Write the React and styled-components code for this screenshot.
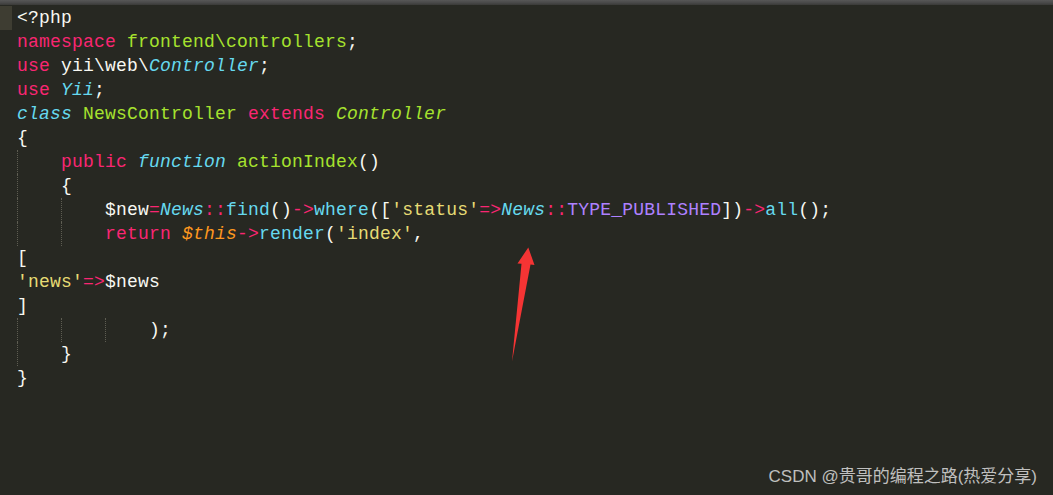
import React from "react";
import styled, { createGlobalStyle } from "styled-components";

const GlobalStyle = createGlobalStyle`
  html, body {
    margin: 0;
    padding: 0;
    background: #272822;
    overflow: hidden;
  }
`;

const colors = {
  plain: "#f8f8f2",
  kw: "#f92672",
  fn: "#a6e22e",
  sup: "#66d9ef",
  str: "#e6db74",
  num: "#ae81ff",
  vr: "#fd971f",
};

const Screen = styled.div`
  position: relative;
  width: 1053px;
  height: 495px;
  background: #272822;
  display: flex;
  flex-direction: column;
  overflow: hidden;
`;

const TopBar = styled.div`
  height: 5px;
  background: linear-gradient(#575757 0%, #4a4a4a 50%, #3a3a38 100%);
`;

const Code = styled.div`
  display: flex;
  flex-direction: column;
  padding-top: 1px;
  font-family: "Liberation Mono", "DejaVu Sans Mono", monospace;
  font-size: 18px;
  letter-spacing: 0.2px;
  color: ${colors.plain};
`;

const Line = styled.div`
  display: flex;
  height: 24px;
  align-items: stretch;
`;

const Gutter = styled.div`
  width: 12px;
  background: ${(p) => (p.$active ? "#3e3d32" : "transparent")};
`;

const Content = styled.div`
  display: flex;
  align-items: center;
  padding-left: 5px;
  white-space: pre;
  line-height: 24px;
`;

const Indent = styled.span`
  box-sizing: border-box;
  width: 44px;
  height: 24px;
  flex-shrink: 0;
  border-left: 1px dotted ${(p) => (p.$guide ? "#5e5d52" : "transparent")};
`;

const Tok = styled.span`
  color: ${(p) => colors[p.$k || "plain"]};
  font-style: ${(p) => (p.$i ? "italic" : "normal")};
`;

const Watermark = styled.div`
  position: absolute;
  right: 16px;
  bottom: 8px;
  font-family: "Liberation Sans", "Noto Sans CJK SC", sans-serif;
  font-size: 17px;
  color: rgba(235, 235, 235, 0.78);
`;

const ArrowSvg = styled.svg`
  position: absolute;
  left: 0;
  top: 0;
  pointer-events: none;
`;

const lines = [
  { indent: 0, toks: [["<?php"]] },
  { indent: 0, toks: [["namespace", "kw"], [" "], ["frontend\\controllers", "fn"], [";"]] },
  { indent: 0, toks: [["use", "kw"], [" yii\\web\\"], ["Controller", "sup", 1], [";"]] },
  { indent: 0, toks: [["use", "kw"], [" "], ["Yii", "sup", 1], [";"]] },
  {
    indent: 0,
    toks: [["class", "sup", 1], [" "], ["NewsController", "fn"], [" "], ["extends", "kw"], [" "], ["Controller", "fn", 1]],
  },
  { indent: 0, toks: [["{"]] },
  {
    indent: 1,
    toks: [["public", "kw"], [" "], ["function", "sup", 1], [" "], ["actionIndex", "fn"], ["()"]],
  },
  { indent: 1, toks: [["{"]] },
  {
    indent: 2,
    toks: [
      ["$new"], ["=", "kw"], ["News", "sup", 1], ["::", "kw"], ["find", "sup"], ["()"], ["->", "kw"],
      ["where", "sup"], ["(["], ["'status'", "str"], ["=>", "kw"], ["News", "sup", 1], ["::", "kw"],
      ["TYPE_PUBLISHED", "num"], ["])"], ["->", "kw"], ["all", "sup"], ["();"],
    ],
  },
  {
    indent: 2,
    toks: [["return", "kw"], [" "], ["$this", "vr", 1], ["->", "kw"], ["render", "sup"], ["("], ["'index'", "str"], [","]],
  },
  { indent: 0, toks: [["["]] },
  { indent: 0, toks: [["'news'", "str"], ["=>", "kw"], ["$news"]] },
  { indent: 0, toks: [["]"]] },
  { indent: 3, toks: [[");"]] },
  { indent: 1, toks: [["}"]] },
  { indent: 0, toks: [["}"]] },
];

const App = () => (
  <>
    <GlobalStyle />
    <Screen>
      <TopBar />
      <Code>
        {lines.map((line, i) => (
          <Line key={i}>
            <Gutter $active={i === 0} />
            <Content>
              {Array.from({ length: line.indent }).map((_, j) => (
                <Indent key={j} $guide />
              ))}
              {line.toks.map(([text, k, it], j) => (
                <Tok key={j} $k={k} $i={it}>
                  {text}
                </Tok>
              ))}
            </Content>
          </Line>
        ))}
      </Code>
      <ArrowSvg width="1053" height="495" viewBox="0 0 1053 495">
        <polygon
          points="528.3,247.5 534.5,265 530.5,264.5 512,361.5 521.5,263.8 517.5,263.5"
          fill="#f53434"
        />
      </ArrowSvg>
      <Watermark>CSDN @贵哥的编程之路(热爱分享)</Watermark>
    </Screen>
  </>
);

export default App;
